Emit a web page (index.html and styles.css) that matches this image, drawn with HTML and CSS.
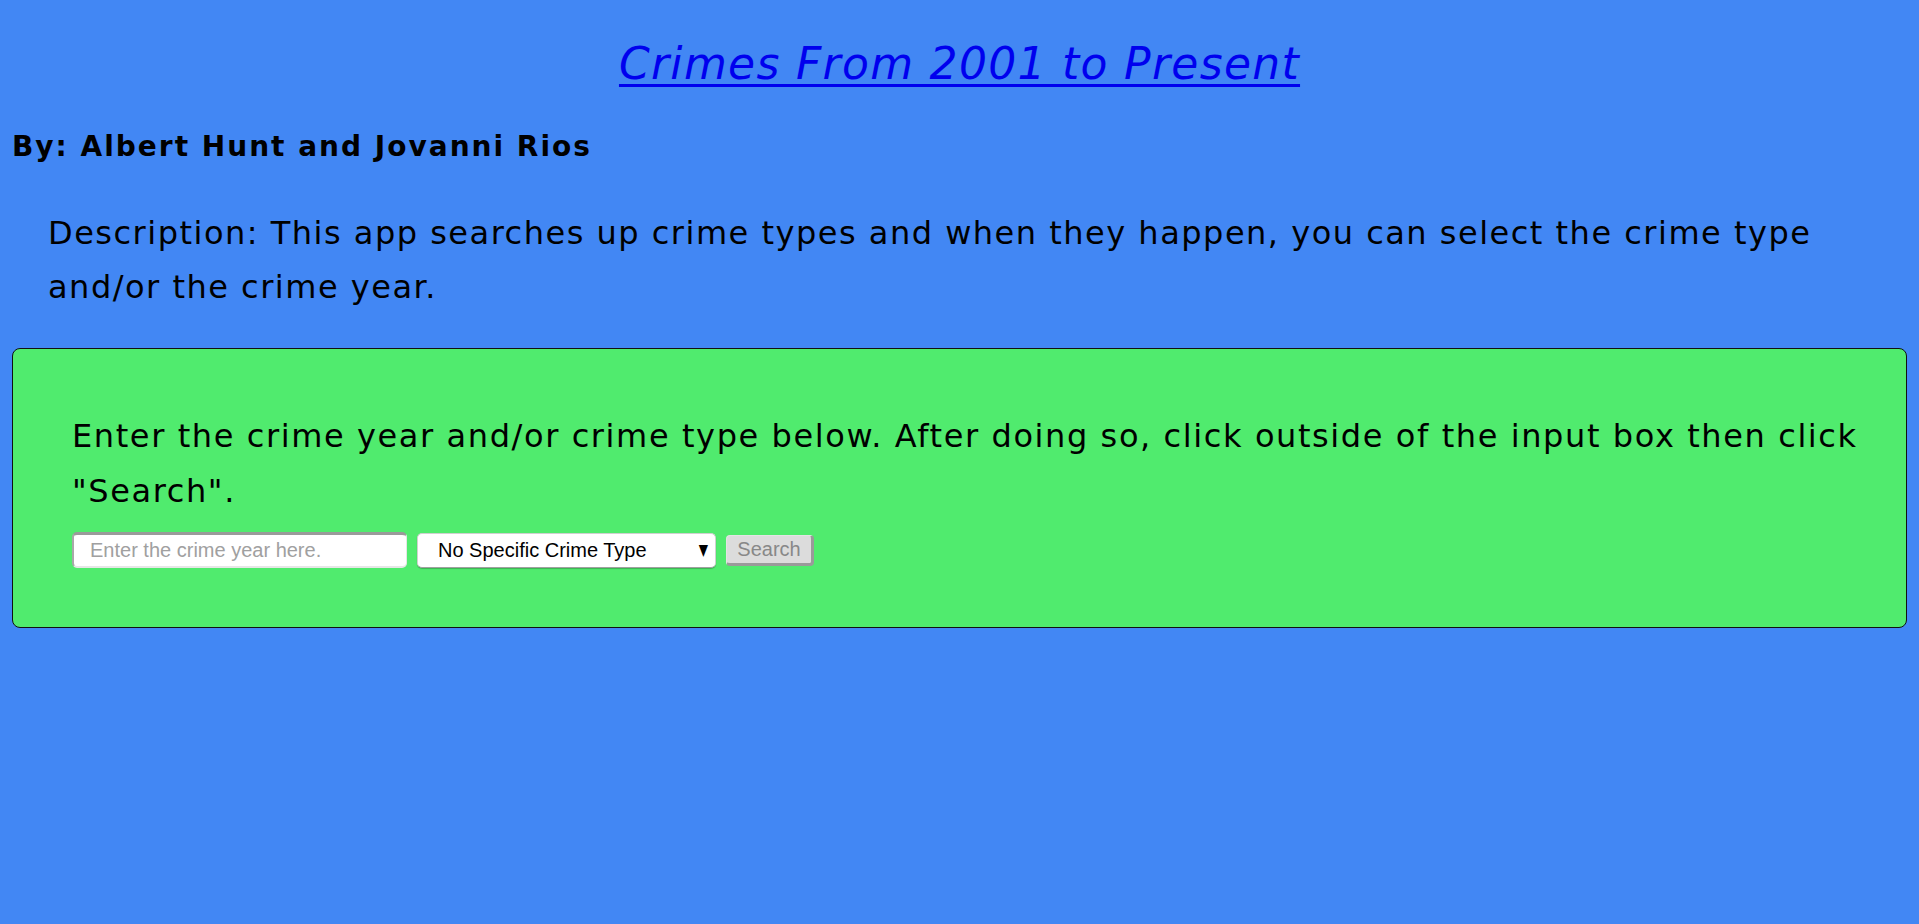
FILE: index.html
```html
<!DOCTYPE html>
<html lang="en">
<head>
<meta charset="utf-8">
<title>Crimes From 2001 to Present</title>
<link rel="stylesheet" href="styles.css">
</head>
<body>
<div class="page">
  <h1 class="title"><a href="#" class="title-link">Crimes From 2001 to Present</a></h1>
  <h2 class="byline">By: Albert Hunt and Jovanni Rios</h2>
  <p class="description">Description: This app searches up crime types and when they happen, you can select the crime type and/or the crime year.</p>
  <section class="search-box">
    <p class="instructions">Enter the crime year and/or crime type below. After doing so, click outside of the input box then click "Search".</p>
    <div class="controls">
      <input class="year-input" type="text" placeholder="Enter the crime year here.">
      <span class="select-wrap">
        <select class="type-select">
          <option>No Specific Crime Type</option>
        </select>
        <span class="select-arrow">&#9660;</span>
      </span>
      <button class="search-btn" type="button">Search</button>
    </div>
  </section>
</div>
</body>
</html>
```

FILE: styles.css
```css
html, body {
  margin: 0;
  padding: 0;
  background: #4287f4;
  height: 100%;
}

body {
  font-family: "DejaVu Sans", "Open Sans", sans-serif;
  color: #000;
}

.page {
  padding: 0 12px;
}

.title {
  margin: 36px 0 0;
  text-align: center;
  font-size: 44px;
  line-height: 56px;
  font-weight: normal;
  font-style: italic;
  letter-spacing: 1.3px;
}

.title-link {
  color: #0000ee;
  text-decoration: underline;
  text-decoration-thickness: 3px;
  text-underline-offset: 5px;
}

.byline {
  margin: 38px 0 0;
  font-size: 28px;
  line-height: 34px;
  font-weight: 700;
  letter-spacing: 2px;
}

.description {
  margin: 42px 0 0;
  padding-left: 36px;
  font-size: 32px;
  line-height: 54px;
  letter-spacing: 1.5px;
}

.search-box {
  margin-top: 34px;
  background: #50eb6e;
  border: 1px solid #111;
  border-radius: 8px;
  padding: 60px 40px 59px 59px;
}

.instructions {
  margin: 0;
  font-size: 32px;
  line-height: 55px;
  letter-spacing: 1.6px;
}

.controls {
  margin-top: 13px;
  display: flex;
  align-items: center;
  gap: 10px;
}

.year-input {
  box-sizing: border-box;
  width: 335px;
  height: 36px;
  padding: 0 16px;
  font-family: "Liberation Sans", Arial, sans-serif;
  font-size: 20px;
  background: #fff;
  border-radius: 5px;
  border-style: solid;
  border-width: 3px 1px 2px 2px;
  border-color: #9a9a9a #e6e6e6 #e6e6e6 #a8a8a8;
  outline: none;
}

.year-input::placeholder {
  color: #a0a0a0;
}

.select-wrap {
  position: relative;
  display: inline-block;
}

.type-select {
  box-sizing: border-box;
  width: 299px;
  height: 35px;
  padding: 0 30px 0 20px;
  font-family: "Liberation Sans", Arial, sans-serif;
  font-size: 20px;
  color: #000;
  background: #fff;
  border: 1px solid #d0d0d0;
  border-bottom-color: #a0a0a0;
  border-radius: 5px;
  box-shadow: 0 1px 1px rgba(0, 0, 0, 0.25);
  appearance: none;
  -webkit-appearance: none;
  outline: none;
  display: block;
}

.select-arrow {
  position: absolute;
  right: 8px;
  top: 50%;
  transform: translateY(-50%) scaleY(1.3);
  font-family: "DejaVu Sans", sans-serif;
  font-size: 12px;
  line-height: 1;
  color: #000;
  pointer-events: none;
}

.search-btn {
  box-sizing: border-box;
  width: 88px;
  height: 31px;
  padding: 0 10px;
  font-family: "Liberation Sans", Arial, sans-serif;
  font-size: 20px;
  color: #888;
  background: #dcdcdc;
  border-style: solid;
  border-width: 1px 3px 3px 1px;
  border-color: #e4e4e4 #9a9a9a #9a9a9a #e4e4e4;
  border-radius: 4px;
  line-height: 1;
}
```
